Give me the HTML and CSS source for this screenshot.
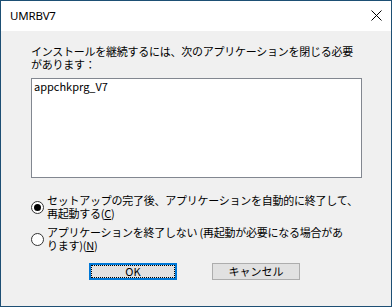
FILE: index.html
```html
<!DOCTYPE html>
<html lang="ja">
<head>
<meta charset="utf-8">
<title>UMRBV7</title>
<link rel="stylesheet" href="styles.css">
</head>
<body>
<div class="window">
  <div class="titlebar">
    <span class="title">UMRBV7</span>
    <span class="close" aria-label="閉じる">
      <svg width="11" height="11" viewBox="0 0 11 11"><path d="M0.5 0.5 L10.5 10.5 M10.5 0.5 L0.5 10.5" stroke="#000" stroke-width="1" fill="none"/></svg>
    </span>
  </div>
  <div class="content">
    <p class="message">インストールを継続するには、次のアプリケーションを閉じる必要<br>があります：</p>
    <div class="listbox">
      <div class="item">appchkprg_V7</div>
    </div>
    <div class="options">
      <label class="option">
        <span class="radio checked"></span>
        <span class="label">セットアップの完了後、アプリケーションを自動的に終了して、<br>再起動する(<u>C</u>)</span>
      </label>
      <label class="option">
        <span class="radio"></span>
        <span class="label">アプリケーションを終了しない (再起動が必要になる場合があ<br>ります)(<u>N</u>)</span>
      </label>
    </div>
    <div class="buttons">
      <button class="btn default">OK</button>
      <button class="btn">キャンセル</button>
    </div>
  </div>
</div>
</body>
</html>
```
FILE: styles.css
```css
* { box-sizing: border-box; }
html, body { margin: 0; padding: 0; }
body {
  width: 392px;
  height: 307px;
  overflow: hidden;
  font-family: "Noto Sans CJK JP", "Noto Sans", sans-serif;
  font-size: 11px;
  color: #000;
}
.window {
  width: 392px;
  height: 307px;
  border: 1px solid #1d4f74;
  display: flex;
  flex-direction: column;
  background: #f0f0f0;
}
.titlebar {
  height: 30px;
  background: #fff;
  display: flex;
  align-items: center;
  justify-content: space-between;
  padding: 0 9px 1px 9px;
}
.title {
  font-family: "Noto Sans", sans-serif;
  font-size: 11.5px;
  letter-spacing: -0.2px;
}
.close {
  display: flex;
}
.content {
  flex: 1;
  padding: 14px 29px 0 30px;
  display: flex;
  flex-direction: column;
}
.message {
  margin: 0;
  line-height: 13px;
  letter-spacing: -0.25px;
  white-space: nowrap;
}
.listbox {
  margin-top: 7px;
  width: 331px;
  height: 100px;
  background: #fff;
  border: 1px solid #828790;
  padding: 1px 2px;
}
.item {
  line-height: 13px;
}
.options {
  margin-top: 16px;
  display: flex;
  flex-direction: column;
  gap: 6px;
}
.option {
  display: flex;
  align-items: center;
}
.radio {
  width: 13px;
  height: 13px;
  border: 1px solid #333;
  border-radius: 50%;
  background: #fff;
  margin-right: 3px;
  display: flex;
  align-items: center;
  justify-content: center;
  flex: none;
}
.radio.checked::after {
  content: "";
  width: 7px;
  height: 7px;
  border-radius: 50%;
  background: #000;
}
.label {
  line-height: 13px;
  letter-spacing: -0.25px;
  white-space: nowrap;
}
.label u { text-decoration: underline; }
.buttons {
  margin-top: 11px;
  padding-left: 58px;
  display: flex;
  gap: 35px;
}
.btn {
  width: 88px;
  height: 17px;
  padding: 0;
  font-family: "Noto Sans CJK JP", "Noto Sans", sans-serif;
  font-size: 11px;
  line-height: 13px;
  background: #e1e1e1;
  border: 1px solid #adadad;
  color: #000;
  display: flex;
  align-items: center;
  justify-content: center;
}
.btn.default {
  border: 2px solid #0078d7;
  outline: 1px dotted #000;
  outline-offset: -3px;
}
```
